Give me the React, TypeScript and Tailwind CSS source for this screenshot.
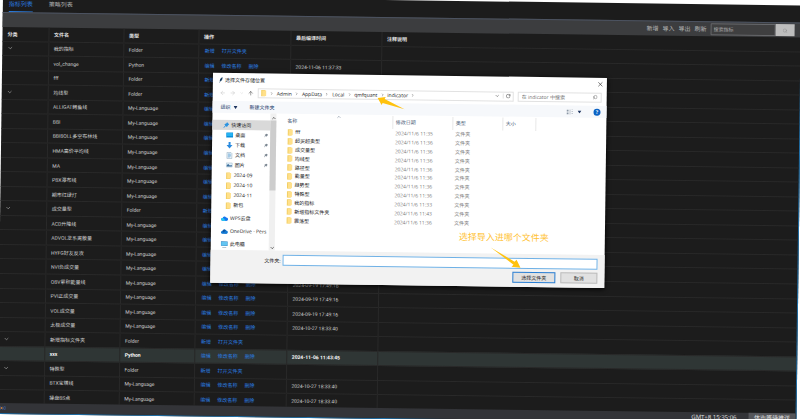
import { ReactNode } from "react";
import clsx from "clsx";
import { ArrowLeft, ArrowRight, ArrowUp, ChevronDown, ChevronRight, ChevronUp, RotateCw, Search, X } from "lucide-react";

type Indicator = {
  name: string;
  type: "Folder" | "Python" | "My-Language";
  time?: string;
  group?: boolean;
  active?: boolean;
};

const indicators: Indicator[] = [
  { name: "我的指标", type: "Folder", group: true },
  { name: "vol_change", type: "Python", time: "2024-11-06 11:37:33" },
  { name: "fff", type: "Folder" },
  { name: "均线型", type: "Folder", group: true },
  { name: "ALLIGAT鳄鱼线", type: "My-Language" },
  { name: "BBI", type: "My-Language" },
  { name: "BBIBOLL多空布林线", type: "My-Language" },
  { name: "HMA高价平均线", type: "My-Language" },
  { name: "MA", type: "My-Language" },
  { name: "PBX瀑布线", type: "My-Language" },
  { name: "期市红绿灯", type: "My-Language" },
  { name: "成交量型", type: "Folder", group: true },
  { name: "ACD升降线", type: "My-Language" },
  { name: "ADVOL龙系离散量", type: "My-Language" },
  { name: "HYFG好友反攻", type: "My-Language" },
  { name: "NVI负成交量", type: "My-Language" },
  { name: "OBV累积能量线", type: "My-Language", time: "2024-09-19 17:49:16" },
  { name: "PVI正成交量", type: "My-Language", time: "2024-09-19 17:49:16" },
  { name: "VOL成交量", type: "My-Language", time: "2024-09-19 17:49:16" },
  { name: "太极成交量", type: "My-Language", time: "2024-10-27 18:33:40" },
  { name: "新增指标文件夹", type: "Folder", group: true },
  { name: "xxx", type: "Python", time: "2024-11-06 11:43:45", active: true },
  { name: "特殊型", type: "Folder", group: true },
  { name: "BTX宝塔线", type: "My-Language", time: "2024-10-27 18:33:40" },
  { name: "操盘BS点", type: "My-Language", time: "2024-10-27 18:33:40" },
];

const files = [
  { name: "fff", date: "2024/11/6 11:35" },
  { name: "超买超卖型", date: "2024/11/6 11:36" },
  { name: "成交量型", date: "2024/11/6 11:36" },
  { name: "均线型", date: "2024/11/6 11:36" },
  { name: "路径型", date: "2024/11/6 11:36" },
  { name: "能量型", date: "2024/11/6 11:36" },
  { name: "趋势型", date: "2024/11/6 11:36" },
  { name: "特殊型", date: "2024/11/6 11:36" },
  { name: "我的指标", date: "2024/11/6 11:33" },
  { name: "新增指标文件夹", date: "2024/11/6 11:43" },
  { name: "震荡型", date: "2024/11/6 11:36" },
];

const crumbs = ["Admin", "AppData", "Local", "qmfquant", "indicator"];

const FolderIcon = () => (
  <svg viewBox="0 0 12 14" className="h-[7px] w-[6px] shrink-0">
    <path d="M1 1h7l1 1v12H1z" fill="#f3cf63" />
    <path d="M3 2h8v11H3z" fill="#ffe08a" />
  </svg>
);

const DesktopIcon = () => (
  <svg viewBox="0 0 14 12" className="h-[6px] w-[7px] shrink-0">
    <path d="M0 1h14v10H0z" fill="#0a8fdc" />
    <path d="M1 2h12v6H1z" fill="#25b3f2" />
  </svg>
);

const DownloadIcon = () => (
  <svg viewBox="0 0 14 14" className="h-[7px] w-[7px] shrink-0">
    <path d="M5 0h4v6h4l-6 7-6-7h4z" fill="#2a8be0" />
  </svg>
);

const DocumentIcon = () => (
  <svg viewBox="0 0 14 14" className="h-[7px] w-[7px] shrink-0">
    <path d="M2 1h8l2 2v10H2z" fill="#e8f1f8" stroke="#8fa9bd" />
    <path d="M4 4h5M4 6h6M4 8h6M4 10h4" stroke="#4b96cf" />
  </svg>
);

const PictureIcon = () => (
  <svg viewBox="0 0 14 12" className="h-[6px] w-[7px] shrink-0">
    <path d="M1 2h12v8H1z" fill="#e3f1fa" stroke="#9ab3c4" />
    <path d="M2 9V6l3-2 3 3 4-1v3z" fill="#3c6f9c" />
  </svg>
);

const StarPinIcon = () => (
  <svg viewBox="0 0 12 12" className="h-[6px] w-[6px] shrink-0">
    <path d="M7 0l5 5-2 1-2 3-1 1-2-2-4 4-1-1 4-4-2-2 3-2 2-1z" fill="#2b93e0" />
  </svg>
);

const PinIcon = () => (
  <svg viewBox="0 0 10 10" className="h-[4px] w-[4px] shrink-0">
    <path d="M6 0l4 4-2 1-2 3-2-2-3 4-1-1 3-3-2-2 3-2z" fill="#7c8792" />
  </svg>
);

const WpsCloudIcon = () => (
  <svg viewBox="0 0 14 10" className="h-[5px] w-[7px] shrink-0">
    <path d="M3 10a3 3 0 010-6 4 4 0 017-1 3.500 3.500 0 011 7z" fill="#1677f0" />
    <path d="M3 10a3 3 0 010-6c3 0 4 3 6 6z" fill="#25c8f0" />
  </svg>
);

const OneDriveIcon = () => (
  <svg viewBox="0 0 14 10" className="h-[5px] w-[7px] shrink-0">
    <path d="M3 10a3 3 0 010-6 4 4 0 017-1 3.500 3.500 0 011 7z" fill="#1279d3" />
    <path d="M3 4a4 4 0 017-1L5 7z" fill="#0a55a5" />
  </svg>
);

const ComputerIcon = () => (
  <svg viewBox="0 0 14 14" className="h-[7px] w-[7px] shrink-0">
    <path d="M0 1h14v9H0z" fill="#2f87c4" />
    <path d="M1 2h12v7H1z" fill="#62c5f2" />
    <path d="M3 12h8v1H3z" fill="#5d7f99" />
  </svg>
);

const Triangle = () => (
  <svg viewBox="0 0 8 6" className="h-[3px] w-[4px] shrink-0">
    <path d="M0 0h8L4 6z" fill="#1e3560" />
  </svg>
);

const quickAccess: { label: string; icon: ReactNode; pinned?: boolean }[] = [
  { label: "桌面", icon: <DesktopIcon />, pinned: true },
  { label: "下载", icon: <DownloadIcon />, pinned: true },
  { label: "文档", icon: <DocumentIcon />, pinned: true },
  { label: "图片", icon: <PictureIcon />, pinned: true },
  { label: "2024-09", icon: <FolderIcon /> },
  { label: "2024-10", icon: <FolderIcon /> },
  { label: "2024-11", icon: <FolderIcon /> },
  { label: "新包", icon: <FolderIcon /> },
];

const places = [
  { label: "WPS云盘", icon: <WpsCloudIcon /> },
  { label: "OneDrive - Pers", icon: <OneDriveIcon /> },
  { label: "此电脑", icon: <ComputerIcon /> },
];

const IndicatorTable = () => (
  <div className="min-h-0 flex-1 overflow-hidden">
    <table className="h-[calc(100%+2px)] w-full table-fixed border-collapse text-left text-[5px] leading-[8px] text-[#d0d0d0]">
      <colgroup>
        <col className="w-[46px]" />
        <col className="w-[75px]" />
        <col className="w-[75px]" />
        <col className="w-[92px]" />
        <col className="w-[91px]" />
        <col />
      </colgroup>
      <thead>
        <tr className="h-[14px] border-b border-[#292929] text-[#e2e2e2]">
          {["分类", "文件名", "类型", "操作", "最后编译时间", "注释说明"].map((title) => (
            <th key={title} className="h-[14px] border-r border-[#292929] px-[5px] font-bold last:border-r-0">
              {title}
            </th>
          ))}
        </tr>
      </thead>
      <tbody>
        {indicators.map(({ name, type, time, group, active }) => {
          const actions = type === "Folder" ? ["新增", "打开文件夹"] : ["编辑", "修改名称", "删除"];
          return (
            <tr
              key={name}
              className={clsx("border-b border-[#292929]", active && "bg-[#2f3635] font-bold text-white")}
            >
              <td className="border-r border-[#292929] px-[5px]">
                {group && (
                  <button aria-label={`折叠${name}`} className="block">
                    <ChevronDown className="size-[6px]" />
                  </button>
                )}
              </td>
              <td className="border-r border-[#292929] px-[5px] whitespace-nowrap">{name}</td>
              <td className="border-r border-[#292929] px-[5px]">{type}</td>
              <td className="border-r border-[#292929] px-[6px]">
                <div className="flex gap-[7px] font-normal whitespace-nowrap text-[#2a7de1]">
                  {actions.map((action) => (
                    <a key={action} href="#">
                      {action}
                    </a>
                  ))}
                </div>
              </td>
              <td className="border-r border-[#292929] px-[5px] whitespace-nowrap">{time}</td>
              <td />
            </tr>
          );
        })}
      </tbody>
    </table>
  </div>
);

const Sidebar = () => (
  <div className="flex w-[64px] shrink-0">
    <nav className="w-[58px] overflow-hidden pt-[7px] whitespace-nowrap">
      <a href="#" className="flex h-[10px] items-center gap-[2px] bg-[#d9d9d9] pl-[11px]">
        <StarPinIcon />
        快速访问
      </a>
      {quickAccess.map(({ label, icon, pinned }) => (
        <a key={label} href="#" className="flex h-[10px] items-center gap-[2px] pr-[2px] pl-[14px]">
          {icon}
          <span className="flex-1">{label}</span>
          {pinned && <PinIcon />}
        </a>
      ))}
      {places.map(({ label, icon }) => (
        <a key={label} href="#" className="mt-[3px] flex h-[10px] items-center gap-[2px] pl-[10px]">
          {icon}
          {label}
        </a>
      ))}
    </nav>
    <div className="flex w-[6px] flex-col items-center justify-between bg-[#f0f0f0] pt-[2px]">
      <ChevronUp className="size-[5px]" strokeWidth={3} />
      <div className="mb-auto h-[70px] w-full bg-[#cdcdcd]" />
      <ChevronDown className="size-[5px]" strokeWidth={3} />
    </div>
  </div>
);

const FileList = () => (
  <table className="h-[110px] w-full table-fixed border-collapse text-left text-[#7a7a7a]">
    <colgroup>
      <col className="w-[116px]" />
      <col className="w-[60px]" />
      <col className="w-[50px]" />
      <col className="w-[33px]" />
      <col />
    </colgroup>
    <thead>
      <tr className="h-[13px] align-top text-[#4c607a]">
        {["名称", "修改日期", "类型", "大小"].map((title, index) => (
          <th
            key={title}
            className={clsx("relative border-r border-[#e8e8e8] pt-[2px] font-normal", index === 0 ? "pl-[11px]" : "pl-[3px]")}
          >
            {title}
            {index === 0 && <ChevronUp className="absolute -top-px left-[60px] size-[5px]" />}
          </th>
        ))}
        <th />
      </tr>
    </thead>
    <tbody>
      {files.map(({ name, date }) => (
        <tr key={name}>
          <td className="pl-[11px] text-[#222]">
            <div className="flex items-center gap-[2px]">
              <FolderIcon />
              {name}
            </div>
          </td>
          <td className="pl-[3px] whitespace-nowrap">{date}</td>
          <td className="pl-[3px]">文件夹</td>
          <td />
          <td />
        </tr>
      ))}
    </tbody>
  </table>
);

const FolderDialog = () => (
  <div
    role="dialog"
    aria-labelledby="dialog-title"
    className="absolute top-[75px] left-[211px] flex h-[210px] w-[394px] flex-col bg-white font-['Open_Sans','Noto_Sans_CJK_SC',sans-serif] text-[5px] leading-[8px] text-[#222] shadow-[0_1px_5px_#000]"
  >
    <div className="flex h-[13px] items-center justify-between pr-[3px] pl-[6px]">
      <div className="flex items-center gap-[2px]">
        <svg viewBox="0 0 8 12" className="h-[6px] w-[4px]">
          <path d="M7 0C3 2 1 6 2 9L1 12h1l1-3c3-1 5-5 4-9z" fill="#1d4266" />
        </svg>
        <h1 id="dialog-title">选择文件存储位置</h1>
      </div>
      <button aria-label="关闭">
        <X className="size-[7px]" />
      </button>
    </div>

    <div className="flex h-[13px] items-center gap-[4px] pr-[5px] pl-[7px]">
      <div className="flex w-[34px] shrink-0 items-center justify-between text-[#c4c4c4]">
        <button aria-label="后退">
          <ArrowLeft className="size-[6px]" />
        </button>
        <button aria-label="前进">
          <ArrowRight className="size-[6px]" />
        </button>
        <button aria-label="最近位置">
          <ChevronDown className="size-[4px]" />
        </button>
        <button aria-label="上移" className="text-[#444]">
          <ArrowUp className="size-[6px]" />
        </button>
      </div>
      <div className="flex h-[10px] flex-1 items-center gap-[3px] border border-[#e2e2e2] pr-[2px] pl-[2px]">
        <FolderIcon />
        <ChevronRight className="size-[4px]" />
        {crumbs.map((crumb) => (
          <span key={crumb} className="flex items-center gap-[3px]">
            <a href="#">{crumb}</a>
            <ChevronRight className="size-[4px]" />
          </span>
        ))}
        <ChevronDown className="ml-auto size-[5px]" />
        <button aria-label="刷新" className="border-l border-[#e2e2e2] pl-[2px]">
          <RotateCw className="size-[5px]" />
        </button>
      </div>
      <label className="flex h-[10px] w-[84px] items-center border border-[#e2e2e2] px-[3px]">
        <input
          aria-label="在 indicator 中搜索"
          placeholder="在 indicator 中搜索"
          className="min-w-0 flex-1 outline-none placeholder:text-[#6f6f6f]"
        />
        <Search className="size-[5px] -scale-x-100 text-[#555]" />
      </label>
    </div>

    <div className="mt-[2px] flex h-[12px] items-center bg-[#f6f8fb] pr-[6px] pl-[8px] text-[#24406e]">
      <button className="flex items-center gap-[3px]">
        组织 <Triangle />
      </button>
      <button className="ml-[12px]">新建文件夹</button>
      <button aria-label="更改视图" className="ml-auto flex items-center gap-[4px]">
        <svg viewBox="0 0 14 10" className="h-[5px] w-[7px]" fill="#8b97a5">
          <path d="M0 0h4v4H0zM0 6h4v4H0zM6 0h2v2H6zM6 4h2v2H6zM6 8h2v2H6zM10 0h3v1h-3zM10 4h3v1h-3zM10 8h3v1h-3z" />
        </svg>
        <Triangle />
      </button>
      <button
        aria-label="帮助"
        className="ml-[12px] flex size-[7px] items-center justify-center rounded-full bg-[#0b63c5] font-bold text-white"
      >
        ?
      </button>
    </div>

    <div className="flex h-[137px] shrink-0">
      <Sidebar />
      <div className="min-w-0 flex-1 pt-px">
        <FileList />
      </div>
    </div>

    <div className="flex flex-1 flex-col gap-[3px] bg-[#f2f2f2] pt-[4px] pr-[7px]">
      <div className="flex items-center gap-[2px]">
        <label htmlFor="folder" className="w-[70px] text-right">
          文件夹:
        </label>
        <input id="folder" className="h-[11px] flex-1 border border-[#6fb1e6] bg-white px-[2px] outline-none" />
      </div>
      <div className="flex justify-end gap-[5px]">
        <button className="h-[11px] w-[43px] border border-[#2a7fd4] bg-[#e1e1e1]">选择文件夹</button>
        <button className="h-[11px] w-[37px] border border-[#bdbdbd] bg-[#e1e1e1]">取消</button>
      </div>
    </div>

    {/* yellow hints on top of the dialog */}
    <svg viewBox="0 0 394 210" className="pointer-events-none absolute inset-0" fill="#ffc20e">
      <path d="M165 23l8-1-1 2 20 10-22-6-1 2z" />
      <path d="M280 171l24 14 2-2 4 8-9-1 2-2z" />
    </svg>
    <p className="absolute top-[155px] left-[248px] text-[9px] leading-[12px] whitespace-nowrap text-[#ffc233]">
      选择导入进哪个文件夹
    </p>
  </div>
);

const App = () => {
  return (
    <div className="h-screen overflow-hidden bg-white">
      <main className="relative -mt-[5px] -mr-[2px] ml-[3px] flex h-screen origin-top-left rotate-[0.75deg] flex-col border-r border-b border-[#1f6fa8] bg-[#1c1c1c] font-[Roboto,'Noto_Sans_CJK_SC',sans-serif]">
        <nav className="flex h-[17px] shrink-0 gap-[16px] pt-[3px] pl-[6px] text-[6px] leading-[12px] text-[#a8a8a8]">
          <a href="#" className="h-[14px] border-b border-[#2a7de1] text-[#2a7de1]">
            指标列表
          </a>
          <a href="#">策略列表</a>
        </nav>

        <div className="flex h-[15px] shrink-0 items-center justify-end gap-[4px] border-t border-[#4c5361] bg-[#3c3d3f] pr-[6px] text-[6px] leading-[8px] text-[#b4b4b4]">
          <button>新增</button>
          <button>导入</button>
          <button>导出</button>
          <button>刷新</button>
          <div className="flex h-[12px] w-[84px]">
            <input
              aria-label="搜索指标"
              placeholder="搜索指标"
              className="min-w-0 flex-1 rounded-l-[1px] border border-[#66676a] bg-[#3f3f40] px-[2px] text-[5px] outline-none placeholder:text-[#a8a8a8]"
            />
            <button aria-label="搜索" className="flex w-[19px] items-center justify-center bg-[#bdbdbd] text-[#8a8a8a]">
              <Search className="size-[5px]" />
            </button>
          </div>
        </div>

        <IndicatorTable />

        <footer className="flex h-[10px] shrink-0 items-center gap-[12px] bg-[#333438] font-['Open_Sans','Noto_Sans_CJK_SC',sans-serif] text-[#e0e0e0]">
          <svg viewBox="0 0 16 8" className="h-[4px] w-[8px]" fill="none" stroke="#3e5d96" strokeWidth="2">
            <path d="M6 1q-3 3 0 6M2 0q-3 4 0 8M10 1q3 3 0 6M14 0q3 4 0 8" />
            <circle cx="8" cy="4" r="1" fill="#c47a3a" stroke="#c47a3a" />
          </svg>
          <time className="ml-auto text-[6px] leading-[10px]">GMT+8 15:35:06</time>
          <button className="h-[10px] w-[47px] bg-[#55565a] text-[6px] leading-[10px]">休市等待推送</button>
        </footer>

        <FolderDialog />
      </main>
    </div>
  );
};

export default App;
